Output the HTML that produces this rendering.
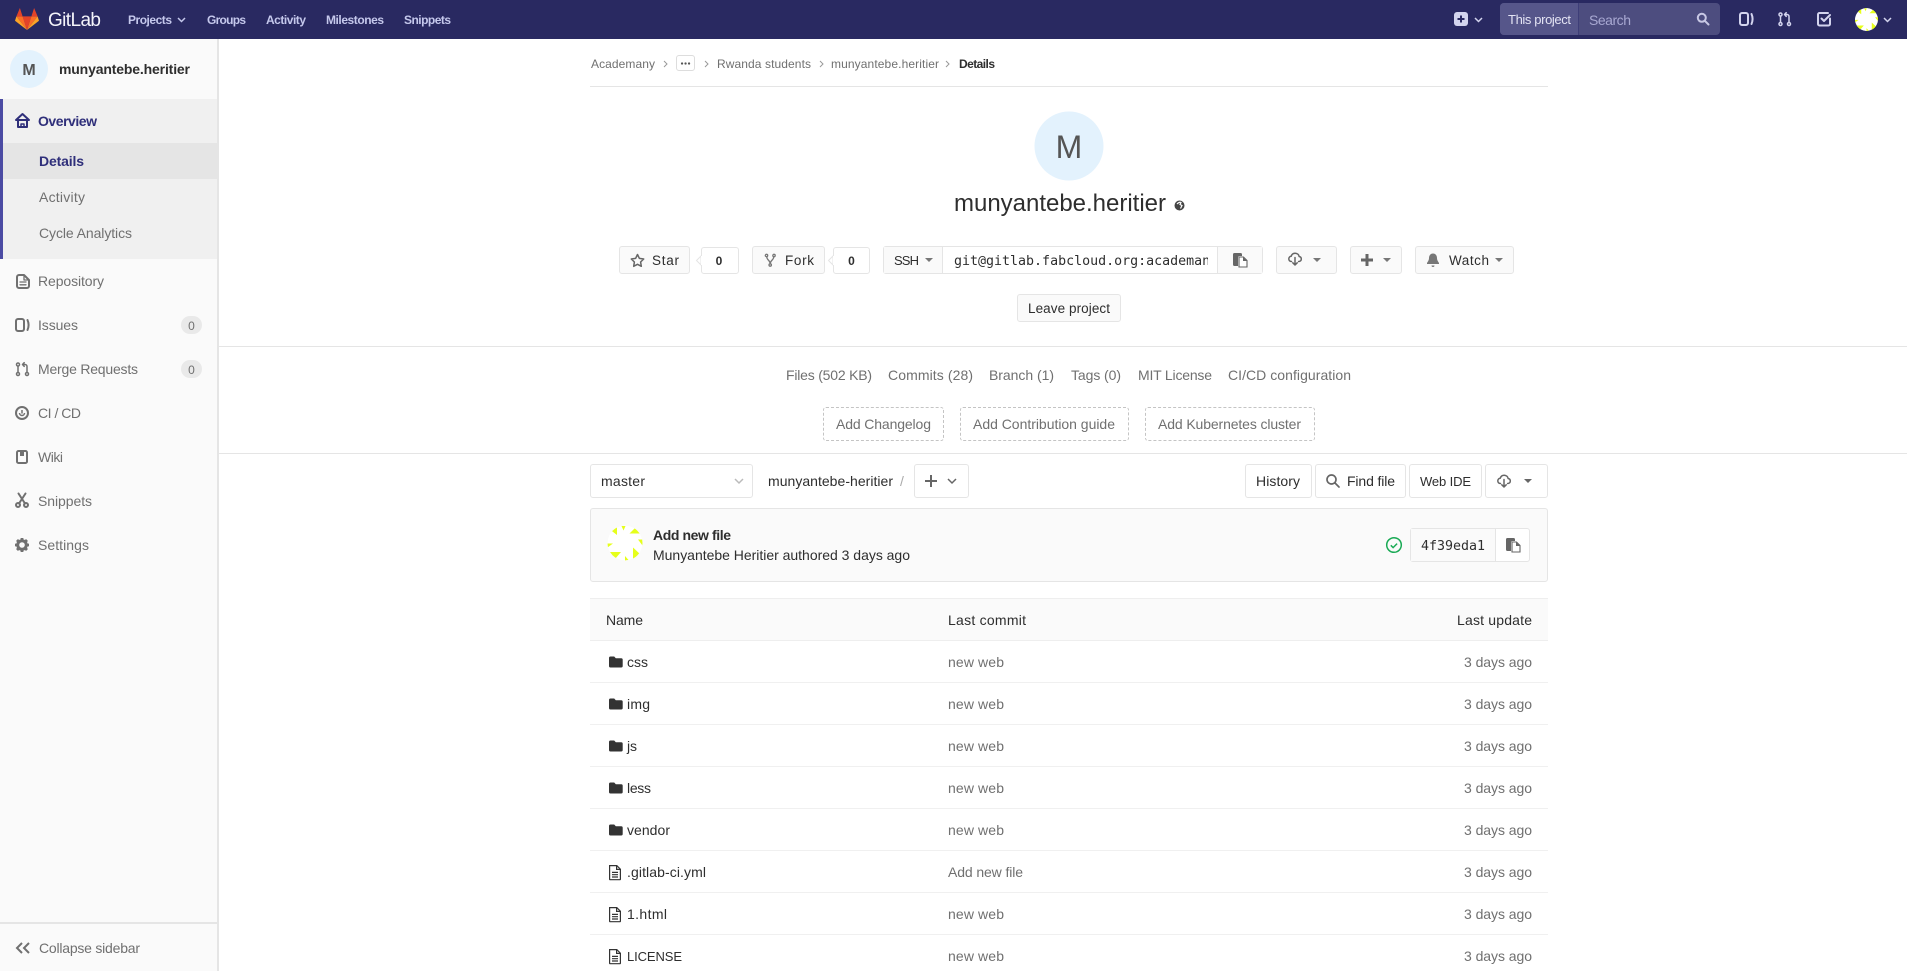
<!DOCTYPE html>
<html lang="en">
<head>
<meta charset="utf-8">
<title>munyantebe.heritier · GitLab</title>
<style>
html,body{margin:0;padding:0;width:1907px;height:971px;overflow:hidden;background:#fff}
.b{position:absolute;box-sizing:border-box}
.btn{position:absolute;box-sizing:border-box;border:1px solid #e5e5e5;border-radius:3px;background:#fff}
.g{background:#fafafa}
svg{position:absolute;left:0;top:0}
text{font-family:"Liberation Sans",sans-serif;font-size:14px;fill:#2e2e2e}
.s text,text.s{fill:#707070}
.n text{font-weight:bold;font-size:12px;fill:#c5c8ec}
.m{font-family:"DejaVu Sans Mono","Liberation Mono",monospace;font-size:13.3px}
.i{fill:none;stroke:#707070;stroke-width:2;stroke-linecap:round;stroke-linejoin:round}
.w{fill:none;stroke:#d3d4ee;stroke-width:2;stroke-linecap:round;stroke-linejoin:round}
.d{fill:none;stroke:#666;stroke-width:1.5;stroke-linecap:round;stroke-linejoin:round}
</style>
</head>
<body>
<div class="b" style="left:0;top:0;width:1907px;height:39px;background:#292961"></div>
<div class="b" style="left:0;top:39px;width:219px;height:932px;background:#fafafa;border-right:2px solid #e5e5e5"></div>
<div class="b" style="left:0;top:99px;width:217px;height:160px;background:#f0f0f0;border-left:3px solid #4b4ba3"></div>
<div class="b" style="left:3px;top:143px;width:214px;height:36px;background:#e5e5e5"></div>
<div class="b" style="left:181px;top:316px;width:21px;height:18px;border-radius:9px;background:#e9e9e9"></div>
<div class="b" style="left:181px;top:360px;width:21px;height:18px;border-radius:9px;background:#e9e9e9"></div>
<div class="b" style="left:0;top:922px;width:217px;height:2px;background:#e5e5e5"></div>

<div class="b" style="left:1500px;top:3px;width:220px;height:32px;border-radius:4px;background:#4d4d7f"></div>
<div class="b" style="left:1500px;top:3px;width:79px;height:32px;border-radius:4px 0 0 4px;background:#56568a;border-right:1px solid #3e3e78"></div>

<div class="b" style="left:590px;top:86px;width:958px;height:1px;background:#e5e5e5"></div>
<div class="btn" style="left:676px;top:55px;width:19px;height:16px;border-color:#ddd"></div>

<div class="btn g" style="left:619px;top:246px;width:71px;height:28px"></div>
<div class="btn" style="left:701px;top:247px;width:38px;height:27px"></div>
<div class="btn g" style="left:752px;top:246px;width:73px;height:28px"></div>
<div class="btn" style="left:833px;top:247px;width:37px;height:27px"></div>
<div class="btn" style="left:883px;top:246px;width:380px;height:28px"></div>
<div class="b g" style="left:884px;top:247px;width:59px;height:26px;border-right:1px solid #e5e5e5;background:#fafafa"></div>
<div class="b g" style="left:1217px;top:247px;width:45px;height:26px;border-left:1px solid #e5e5e5"></div>
<div class="btn g" style="left:1276px;top:246px;width:61px;height:28px"></div>
<div class="btn g" style="left:1350px;top:246px;width:52px;height:28px"></div>
<div class="btn g" style="left:1415px;top:246px;width:99px;height:28px"></div>
<div class="btn g" style="left:1017px;top:294px;width:104px;height:28px"></div>

<div class="b" style="left:219px;top:346px;width:1688px;height:1px;background:#e5e5e5"></div>
<div class="btn" style="left:823px;top:407px;width:121px;height:34px;border:1px dashed #c4c4c4"></div>
<div class="btn" style="left:960px;top:407px;width:169px;height:34px;border:1px dashed #c4c4c4"></div>
<div class="btn" style="left:1145px;top:407px;width:170px;height:34px;border:1px dashed #c4c4c4"></div>
<div class="b" style="left:219px;top:453px;width:1688px;height:1px;background:#e5e5e5"></div>

<div class="btn" style="left:590px;top:464px;width:163px;height:34px"></div>
<div class="btn" style="left:914px;top:464px;width:55px;height:34px"></div>
<div class="btn" style="left:1245px;top:464px;width:67px;height:34px"></div>
<div class="btn" style="left:1315px;top:464px;width:91px;height:34px"></div>
<div class="btn" style="left:1409px;top:464px;width:73px;height:34px"></div>
<div class="btn" style="left:1485px;top:464px;width:63px;height:34px"></div>

<div class="btn g" style="left:590px;top:508px;width:958px;height:74px"></div>
<div class="btn" style="left:1410px;top:528px;width:120px;height:34px"></div>
<div class="b g" style="left:1411px;top:529px;width:85px;height:32px;border-right:1px solid #e5e5e5"></div>

<div class="b g" style="left:590px;top:598px;width:958px;height:43px;border-top:1px solid #eee;border-bottom:1px solid #eee"></div>
<div class="b" style="left:590px;top:682px;width:958px;height:1px;background:#f0f0f0"></div>
<div class="b" style="left:590px;top:724px;width:958px;height:1px;background:#f0f0f0"></div>
<div class="b" style="left:590px;top:766px;width:958px;height:1px;background:#f0f0f0"></div>
<div class="b" style="left:590px;top:808px;width:958px;height:1px;background:#f0f0f0"></div>
<div class="b" style="left:590px;top:850px;width:958px;height:1px;background:#f0f0f0"></div>
<div class="b" style="left:590px;top:892px;width:958px;height:1px;background:#f0f0f0"></div>
<div class="b" style="left:590px;top:934px;width:958px;height:1px;background:#f0f0f0"></div>

<svg width="1907" height="971" viewBox="0 0 1907 971" xmlns="http://www.w3.org/2000/svg">
<defs>
<clipPath id="av"><circle r="17.5"/></clipPath>
<clipPath id="urlclip"><rect x="944" y="247" width="264" height="26"/></clipPath>
<g id="idn" clip-path="url(#av)">
<circle r="17.5" fill="#fff"/>
<g fill="#e6ff1a">
<polygon points="-14.5,-13 -8,-16 -8,-8"/>
<polygon points="-3.5,-17 0.5,-17 -1.5,-12.5"/>
<polygon points="4.5,-9.500 15,-9.500 10,-15"/>
<polygon points="-17.5,0.5 -12,0.5 -17.5,4.500"/>
<polygon points="13,-3.5 17.5,-3.5 17.5,2.5"/>
<polygon points="-15,9 -4,9 -10,16"/>
<polygon points="0,13 3.5,17 0,17.500"/>
<polygon points="8,4.5 15.500,11.500 8,16"/>
</g>
</g>
<g id="folder"><path d="M0 2.5a1.5 1.5 0 0 1 1.5-1.5h3.7l1.6 1.8h5.4a1.5 1.5 0 0 1 1.5 1.5v6.2a1.5 1.5 0 0 1-1.5 1.5H1.500a1.500 1.500 0 0 1-1.500-1.500z" fill="#333"/></g>
<g id="file" fill="none" stroke="#333" stroke-width="1.2"><path d="M.6.6h7.2l3.6 3.6v9.9a.6.6 0 0 1-.6.6H1.200a.6.600 0 0 1-.6-.6z"/><path d="M7.600.6v3.800h3.800M3 7.400h6M3 9.700h6M3 12h6"/></g>
<g id="copy"><path d="M0 1.500A1.500 1.500 0 0 1 1.500 0h6A1.500 1.500 0 0 1 9 1.500V3H6.500A1.500 1.500 0 0 0 5 4.500V13H1.500A1.500 1.500 0 0 1 0 11.500z" fill="#666"/><path d="M6 4h4.500L14 7.500V14H6z" fill="#fff" stroke="#666" stroke-width="1.100"/><path d="M10 4v4h4" fill="#666"/></g>
<g id="cloud"><path class="d" d="M3.500 9.500C1.500 9.500.8 8 .8 6.800.8 5.400 2 4.200 3.200 4.300 3.800 2.300 5.400 1.200 7.200 1.200c2.300 0 3.800 1.700 3.900 3.300 1.500.2 2.200 1.300 2.200 2.500 0 1.500-1.100 2.500-2.700 2.500"/><path class="d" d="M7 5.500v7.500M4.800 10.800L7 13l2.200-2.200"/></g>
</defs>

<!-- logo -->
<g transform="translate(15,8)">
<polygon points="12,22 7.600,8.400 16.400,8.400" fill="#e24329"/>
<polygon points="12,22 7.600,8.400 1.400,8.400" fill="#fc6d26"/>
<polygon points="12,22 16.400,8.400 22.600,8.400" fill="#fc6d26"/>
<polygon points="1.400,8.400 0,12.800 12,22" fill="#fca326"/>
<polygon points="22.600,8.400 24,12.800 12,22" fill="#fca326"/>
<polygon points="1.400,8.400 7.600,8.400 4.900,0" fill="#e24329"/>
<polygon points="22.600,8.400 16.400,8.400 19.100,0" fill="#e24329"/>
</g>
<text x="48" y="26" style="font-size:19px;fill:#f4f4fa" textLength="53">GitLab</text>

<!-- nav -->
<g class="n">
<text x="128" y="24" textLength="44">Projects</text>
<text x="207" y="24" textLength="39">Groups</text>
<text x="266" y="24" textLength="40">Activity</text>
<text x="326" y="24" textLength="58">Milestones</text>
<text x="404" y="24" textLength="47">Snippets</text>
</g>
<path d="M178 18l3.500 3.500L185 18" fill="none" stroke="#c5c8ec" stroke-width="1.500"/>
<rect x="1454" y="12" width="14" height="14" rx="3" fill="#d3d4ee"/>
<path d="M1461 15.500v7M1457.500 19h7" stroke="#292961" stroke-width="2"/>
<path d="M1475 18l3.500 3.500L1482 18" fill="none" stroke="#d3d4ee" stroke-width="1.500"/>
<text x="1508" y="24" style="font-size:13px;fill:#e4e4f4" textLength="63">This project</text>
<text x="1589" y="25" style="fill:#a8a8d2" textLength="42">Search</text>
<g transform="translate(1697,13)" fill="none" stroke="#c8c8e4" stroke-width="2"><circle cx="4.800" cy="4.800" r="4"/><path d="M7.800 7.800l3.700 3.700" stroke-linecap="round"/></g>
<g transform="translate(1739,12)" class="w"><rect x="1" y="1" width="8" height="12" rx="2"/><path d="M12.500 2c1.300 3 1.300 7 0 10"/></g>
<g transform="translate(1778,12)"><circle cx="2.500" cy="2.500" r="1.500" class="w" style="stroke-width:1.500"/><circle cx="2.500" cy="12" r="1.500" class="w" style="stroke-width:1.500"/><circle cx="11" cy="12" r="1.500" class="w" style="stroke-width:1.500"/><path class="w" style="stroke-width:1.500" d="M2.500 4.500v5.500M11 10V4.500A2 2 0 0 0 9 2.500H6.500M8.200.7L6.500 2.500l1.700 1.800"/></g>
<g transform="translate(1817,12)" class="w"><path d="M13 6.500v5.500a1.500 1.500 0 0 1-1.500 1.500h-9A1.500 1.500 0 0 1 1 12V2.500A1.500 1.500 0 0 1 2.500 1H11"/><path d="M4.500 6.500L7 9l6-6"/></g>
<g transform="translate(1866.500,19.500) scale(.66)"><use href="#idn"/></g>
<path d="M1884 18l3.500 3.500L1891 18" fill="none" stroke="#d3d4ee" stroke-width="1.500"/>

<!-- sidebar -->
<circle cx="29" cy="69" r="19" fill="#e3f2fd"/>
<text x="29" y="75" text-anchor="middle" style="font-weight:bold;font-size:16px;fill:#555">M</text>
<text x="59" y="74" style="font-weight:bold" textLength="131">munyantebe.heritier</text>
<g transform="translate(15,113)" fill="none" stroke="#2f2f7a" stroke-width="2" stroke-linejoin="round"><path d="M1 7L7.500 1 14 7H1zM3 7v7h9V7"/><path d="M6 14v-3h3v3" stroke-width="1.500"/></g>
<text x="38" y="126" style="font-weight:bold;fill:#2f2f7a" textLength="59">Overview</text>
<text x="39" y="166" style="font-weight:bold;fill:#2f2f7a" textLength="45">Details</text>
<text x="39" y="202" class="s" textLength="46">Activity</text>
<text x="39" y="238" class="s" textLength="93">Cycle Analytics</text>

<text x="38" y="286" class="s" textLength="66">Repository</text>
<text x="38" y="330" class="s" textLength="40">Issues</text>
<text x="38" y="374" class="s" textLength="100">Merge Requests</text>
<text x="38" y="418" class="s" textLength="43">CI / CD</text>
<text x="38" y="462" class="s" textLength="25">Wiki</text>
<text x="38" y="506" class="s" textLength="54">Snippets</text>
<text x="38" y="550" class="s" textLength="51">Settings</text>
<text x="191.500" y="330" text-anchor="middle" class="s" style="font-size:12px">0</text>
<text x="191.500" y="374" text-anchor="middle" class="s" style="font-size:12px">0</text>
<text x="39" y="953" class="s" textLength="101">Collapse sidebar</text>

<g transform="translate(16,274)"><path class="i" d="M3 1h5l5 5v6a2 2 0 0 1-2 2H3a2 2 0 0 1-2-2V3a2 2 0 0 1 2-2z"/><path class="i" style="stroke-width:1.300" d="M8 1.500V6h4.500M4 8h6M4 10.800h6"/></g>
<g transform="translate(15,318)" class="i"><rect x="1" y="1" width="8" height="12" rx="2"/><path d="M12.500 2c1.300 3 1.300 7 0 10"/></g>
<g transform="translate(15.500,362)" class="i" style="stroke-width:1.500"><circle cx="2.500" cy="2.500" r="1.500"/><circle cx="2.500" cy="12" r="1.500"/><circle cx="11.500" cy="12" r="1.500"/><path d="M2.500 4.500v5.500M11.500 10V4.500A2 2 0 0 0 9.500 2.500H7M8.700.7L7 2.500l1.700 1.800"/></g>
<g transform="translate(15,406)"><circle class="i" cx="7" cy="7" r="6"/><path d="M7 4v3.500M4.500 7a2.500 2.500 0 0 0 5 0" fill="none" stroke="#707070" stroke-width="1.500"/></g>
<g transform="translate(16,450)"><rect class="i" x="1" y="1" width="10" height="12" rx="1.500"/><path d="M4 1h4v5H4z" fill="#707070"/></g>
<g transform="translate(15,493)" fill="none" stroke="#707070" stroke-width="2"><circle cx="3" cy="12" r="2"/><circle cx="11" cy="12" r="2"/><path d="M4 10.500L10.500.5M10 10.500L3.500.5" stroke-linecap="round"/></g>
<g transform="translate(22,545)"><circle r="4.300" fill="none" stroke="#707070" stroke-width="3"/><g stroke="#707070" stroke-width="2.800"><path d="M0-7v2.500M0 7V4.500M-7 0h2.500M7 0H4.500M-5-5l1.800 1.800M5 5L3.200 3.200M-5 5l1.800-1.800M5-5L3.200-3.200"/></g></g>
<path d="M22 943l-5 5 5 5M29 943l-5 5 5 5" fill="none" stroke="#707070" stroke-width="2"/>

<!-- breadcrumb -->
<text x="591" y="68" class="s" style="font-size:12px" textLength="64">Academany</text>
<text x="717" y="68" class="s" style="font-size:12px" textLength="94">Rwanda students</text>
<text x="831" y="68" class="s" style="font-size:12px" textLength="108">munyantebe.heritier</text>
<text x="959" y="68" style="font-size:12px;font-weight:bold" textLength="36">Details</text>
<path d="M664 61l3 3-3 3M705 61l3 3-3 3M820 61l3 3-3 3M946 61l3 3-3 3" fill="none" stroke="#999" stroke-width="1"/>
<path d="M682 63.500h.1M685.500 63.500h.1M689 63.500h.1" stroke="#555" stroke-width="2.200" stroke-linecap="round"/>

<!-- project head -->
<circle cx="1069" cy="146" r="34.500" fill="#e3f2fd"/>
<text x="1069" y="158" text-anchor="middle" style="font-size:32px;fill:#555">M</text>
<text x="954" y="211" style="font-size:24px" textLength="212">munyantebe.heritier</text>
<circle cx="1179.500" cy="205.500" r="5" fill="#444"/>
<path d="M1177 204c1.500-1.500 3-2 4-1.500l-1 2 2 1-1.500 3" fill="none" stroke="#fff" stroke-width="1.200"/>

<!-- action row -->
<path d="M637.500 254.500l1.900 3.900 4.300.6-3.100 3 .7 4.300-3.800-2-3.800 2 .7-4.300-3.100-3 4.300-.6z" fill="none" stroke="#666" stroke-width="1.500" stroke-linejoin="round"/>
<text x="652" y="265" style="font-size:13.500px" textLength="27">Star</text>
<text x="719" y="265" text-anchor="middle" style="font-weight:bold;font-size:12px">0</text>
<polygon points="701,256 696.500,260.500 701,265" fill="#fff" stroke="#e5e5e5"/><path d="M702 256v9" stroke="#fff" stroke-width="2"/>
<g transform="translate(765,254)" fill="none" stroke="#777" stroke-width="1.300"><circle cx="1.500" cy="1.500" r="1.200"/><circle cx="9" cy="1.500" r="1.200"/><circle cx="5.200" cy="11" r="1.200"/><path d="M1.800 3c0 3 3.400 3.500 3.400 6.500M8.700 3c0 3-3.500 3.500-3.500 6.500"/></g>
<text x="785" y="265" style="font-size:13.500px" textLength="29">Fork</text>
<text x="851.500" y="265" text-anchor="middle" style="font-weight:bold;font-size:12px">0</text>
<polygon points="833,256 828.500,260.500 833,265" fill="#fff" stroke="#e5e5e5"/><path d="M834 256v9" stroke="#fff" stroke-width="2"/>
<text x="894" y="265" style="font-size:13px" textLength="25">SSH</text>
<polygon points="925,258 933,258 929,262" fill="#777"/>
<text x="954" y="265" class="m" clip-path="url(#urlclip)">git@gitlab.fabcloud.org:academany/fabacademy</text>
<use href="#copy" x="1233" y="253"/>
<use href="#cloud" x="1288" y="252"/>
<polygon points="1313,258 1321,258 1317,262" fill="#777"/>
<path d="M1367 254v12M1361 260h12" stroke="#666" stroke-width="3"/>
<polygon points="1383,258 1391,258 1387,262" fill="#777"/>
<path d="M1433 253.500c-2.500 0-4 2-4 4.500 0 2.500-1.500 4-2 5v1h12v-1c-.5-1-2-2.500-2-5 0-2.500-1.500-4.500-4-4.500zM1431.500 265.500h3a1.500 1.500 0 0 1-3 0z" fill="#777"/>
<text x="1449" y="265" style="font-size:13.500px" textLength="40">Watch</text>
<polygon points="1495,258 1503,258 1499,262" fill="#777"/>
<text x="1028" y="313" style="font-size:13.500px" textLength="82">Leave project</text>

<!-- stats -->
<text x="786" y="380" class="s" textLength="86">Files (502 KB)</text>
<text x="888" y="380" class="s" textLength="85">Commits (28)</text>
<text x="989" y="380" class="s" textLength="65">Branch (1)</text>
<text x="1071" y="380" class="s" textLength="50">Tags (0)</text>
<text x="1138" y="380" class="s" textLength="74">MIT License</text>
<text x="1228" y="380" class="s" textLength="123">CI/CD configuration</text>
<text x="836" y="429" class="s" textLength="95">Add Changelog</text>
<text x="973" y="429" class="s" textLength="142">Add Contribution guide</text>
<text x="1158" y="429" class="s" textLength="143">Add Kubernetes cluster</text>

<!-- controls -->
<text x="601" y="486" textLength="44">master</text>
<path d="M735 479l4 4 4-4" fill="none" stroke="#bbb" stroke-width="1.500"/>
<text x="768" y="486" textLength="125">munyantebe-heritier</text>
<text x="900" y="486" class="s" style="fill:#aaa">/</text>
<path d="M931 475v12M925 481h12" stroke="#666" stroke-width="2"/>
<path d="M948 479l4 4 4-4" fill="none" stroke="#666" stroke-width="1.500"/>
<text x="1256" y="486" textLength="44">History</text>
<g transform="translate(1326,474)" fill="none" stroke="#666" stroke-width="1.700"><circle cx="5.500" cy="5.500" r="4.500"/><path d="M9 9l4 4" stroke-linecap="round"/></g>
<text x="1347" y="486" textLength="48">Find file</text>
<text x="1420" y="486" style="font-size:13px" textLength="51">Web IDE</text>
<use href="#cloud" x="1497" y="474"/>
<polygon points="1524,479 1532,479 1528,483" fill="#666"/>

<!-- commit -->
<g transform="translate(625,543)"><use href="#idn"/></g>
<text x="653" y="540" style="font-weight:bold" textLength="78">Add new file</text>
<text x="653" y="560" textLength="257">Munyantebe Heritier authored 3 days ago</text>
<circle cx="1394" cy="545" r="7.300" fill="none" stroke="#1aaa55" stroke-width="1.500"/>
<path d="M1390.800 545.300l2.300 2.300 4-4" fill="none" stroke="#1aaa55" stroke-width="1.500"/>
<text x="1421" y="550" class="m" textLength="64">4f39eda1</text>
<use href="#copy" x="1506" y="538"/>

<!-- table -->
<text x="606" y="625" textLength="37">Name</text>
<text x="948" y="625" textLength="78">Last commit</text>
<text x="1457" y="625" textLength="75">Last update</text>

<use href="#folder" x="609" y="655.500"/><text x="627" y="667" textLength="21">css</text><text x="948" y="667" class="s" textLength="56">new web</text><text x="1464" y="667" class="s" textLength="68">3 days ago</text>
<use href="#folder" x="609" y="697.500"/><text x="627" y="709" textLength="23">img</text><text x="948" y="709" class="s" textLength="56">new web</text><text x="1464" y="709" class="s" textLength="68">3 days ago</text>
<use href="#folder" x="609" y="739.500"/><text x="627" y="751" textLength="10">js</text><text x="948" y="751" class="s" textLength="56">new web</text><text x="1464" y="751" class="s" textLength="68">3 days ago</text>
<use href="#folder" x="609" y="781.500"/><text x="627" y="793" textLength="24">less</text><text x="948" y="793" class="s" textLength="56">new web</text><text x="1464" y="793" class="s" textLength="68">3 days ago</text>
<use href="#folder" x="609" y="823.500"/><text x="627" y="835" textLength="43">vendor</text><text x="948" y="835" class="s" textLength="56">new web</text><text x="1464" y="835" class="s" textLength="68">3 days ago</text>
<use href="#file" x="609" y="865"/><text x="627" y="877" textLength="79">.gitlab-ci.yml</text><text x="948" y="877" class="s" textLength="75">Add new file</text><text x="1464" y="877" class="s" textLength="68">3 days ago</text>
<use href="#file" x="609" y="907"/><text x="627" y="919" textLength="40">1.html</text><text x="948" y="919" class="s" textLength="56">new web</text><text x="1464" y="919" class="s" textLength="68">3 days ago</text>
<use href="#file" x="609" y="949"/><text x="627" y="961" style="font-size:13px" textLength="55">LICENSE</text><text x="948" y="961" class="s" textLength="56">new web</text><text x="1464" y="961" class="s" textLength="68">3 days ago</text>
</svg>
</body>
</html>
